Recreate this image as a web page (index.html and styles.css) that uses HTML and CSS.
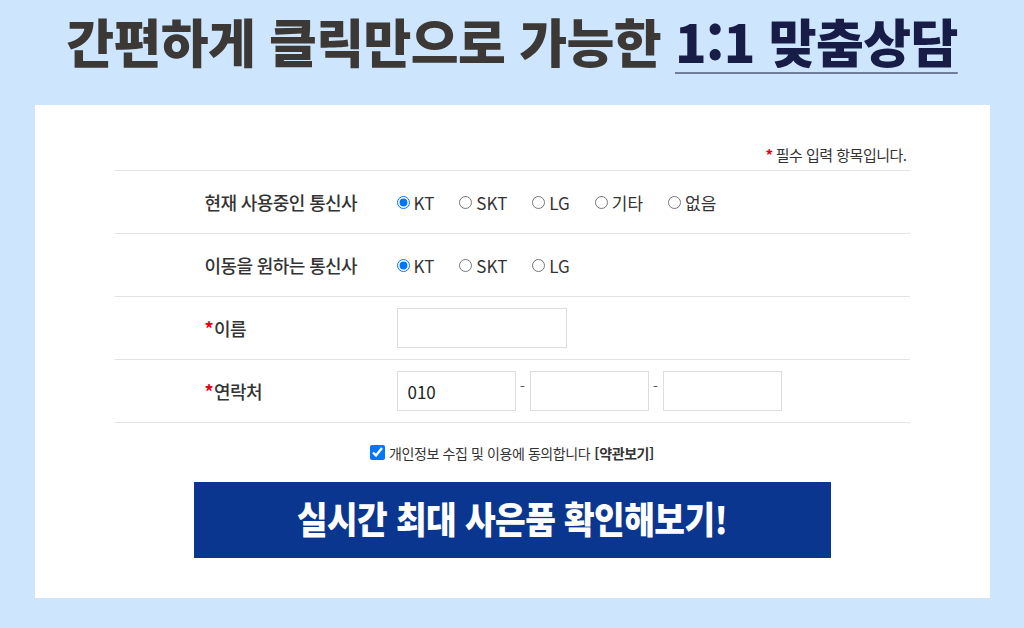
FILE: index.html
```html
<!DOCTYPE html>
<html lang="ko">
<head>
<meta charset="utf-8">
<link rel="stylesheet" href="styles.css">
</head>
<body>
<div class="page">
  <header class="hero">
    <h1 class="hero-title">간편하게 클릭만으로 가능한 <span class="hero-accent">1:1 맞춤상담</span></h1>
  </header>
  <main class="panel">
    <div class="form">
      <p class="req-note"><span class="star">*</span> 필수 입력 항목입니다.</p>
      <div class="row">
        <div class="label">현재 사용중인 통신사</div>
        <div class="field options">
          <label class="opt"><input type="radio" name="cur" checked>KT</label>
          <label class="opt"><input type="radio" name="cur">SKT</label>
          <label class="opt"><input type="radio" name="cur">LG</label>
          <label class="opt"><input type="radio" name="cur">기타</label>
          <label class="opt"><input type="radio" name="cur">없음</label>
        </div>
      </div>
      <div class="row">
        <div class="label">이동을 원하는 통신사</div>
        <div class="field options">
          <label class="opt"><input type="radio" name="mov" checked>KT</label>
          <label class="opt"><input type="radio" name="mov">SKT</label>
          <label class="opt"><input type="radio" name="mov">LG</label>
        </div>
      </div>
      <div class="row">
        <div class="label"><span class="star">*</span>이름</div>
        <div class="field"><input class="text name" type="text"></div>
      </div>
      <div class="row">
        <div class="label"><span class="star">*</span>연락처</div>
        <div class="field phone">
          <input class="text tel" type="text" value="010">
          <span class="dash">-</span>
          <input class="text tel" type="text">
          <span class="dash">-</span>
          <input class="text tel" type="text">
        </div>
      </div>
      <div class="agree">
        <label class="agree-label"><input type="checkbox" checked>개인정보 수집 및 이용에 동의합니다 <b>[약관보기]</b></label>
      </div>
      <button class="cta" type="button"><span class="cta-text">실시간 최대 사은품 확인해보기!</span></button>
    </div>
  </main>
</div>
</body>
</html>
```
FILE: styles.css
```css
* { box-sizing: border-box; }
html, body {
  margin: 0;
  padding: 0;
  background: #cde6fd;
}
body {
  font-family: "Noto Sans CJK KR", "Noto Sans", sans-serif;
  color: #333;
}
.page {
  width: 1024px;
  height: 628px;
  overflow: hidden;
  display: flex;
  flex-direction: column;
  align-items: center;
}
.hero {
  height: 105px;
  display: flex;
  align-items: center;
  justify-content: center;
  padding-bottom: 24px;
}
.hero-title {
  margin: 0;
  font-size: 52px;
  font-weight: 900;
  letter-spacing: -0.6px;
  color: #3b3836;
  line-height: 1;
  white-space: nowrap;
}
.hero-accent {
  color: #171d47;
  text-decoration: underline;
  text-decoration-color: #6e7f9c;
  text-decoration-thickness: 2px;
  text-underline-offset: 9px;
}
.panel {
  width: 955px;
  height: 493px;
  background: #fff;
  padding: 0 80px;
}
.form {
  display: flex;
  flex-direction: column;
}
.req-note {
  margin: 0;
  height: 66px;
  padding-bottom: 5px;
  padding-right: 3px;
  display: flex;
  align-items: flex-end;
  justify-content: flex-end;
  font-size: 15px;
  color: #333;
  letter-spacing: -0.5px;
  border-bottom: 1px solid #e3e3e3;
}
.req-note .star { margin-right: 3px; }
.star { color: #e60012; font-weight: 700; }
.row {
  display: grid;
  grid-template-columns: 282px 1fr;
  align-items: center;
  height: 63px;
  border-bottom: 1px solid #e3e3e3;
}
.label {
  padding-left: 90px;
  font-size: 18px;
  font-weight: 500;
  letter-spacing: -0.6px;
  color: #333;
}
.label .star { margin-right: 1px; }
.field {
  display: flex;
  align-items: center;
}
.opt {
  display: inline-flex;
  align-items: center;
  font-size: 17px;
  color: #333;
  margin-right: 25px;
}
.opt input {
  width: 13px;
  height: 13px;
  margin: 0 4px 0 0;
}
.text {
  height: 40px;
  border: 1px solid #ddd;
  font-family: "Noto Sans CJK KR", "Noto Sans", sans-serif;
  font-size: 17px;
  color: #222;
  padding: 0 10px;
  margin: 0;
  outline: none;
}
.name { width: 170px; }
.tel { width: 119px; }
.dash {
  width: 14px;
  text-align: center;
  font-size: 14px;
  color: #555;
  margin-top: -10px;
}
.agree {
  display: flex;
  justify-content: center;
  height: 59px;
  align-items: center;
}
.agree-label {
  display: inline-flex;
  align-items: center;
  font-size: 14px;
  color: #333;
  letter-spacing: -0.4px;
}
.agree-label input {
  width: 15px;
  height: 15px;
  margin: 0 4px 0 0;
}
.agree-label b { font-weight: 700; margin-left: 4px; }
.cta {
  align-self: center;
  width: 637px;
  height: 76px;
  background: #0a3690;
  border: none;
  color: #fff;
  font-family: "Noto Sans CJK KR", sans-serif;
  font-weight: 900;
  font-size: 37px;
  letter-spacing: -0.6px;
  padding: 0 0 4px 0;
  display: flex;
  align-items: center;
  justify-content: center;
}
.cta-text {
  display: inline-block;
  transform: scaleX(0.9);
  white-space: nowrap;
}
```
